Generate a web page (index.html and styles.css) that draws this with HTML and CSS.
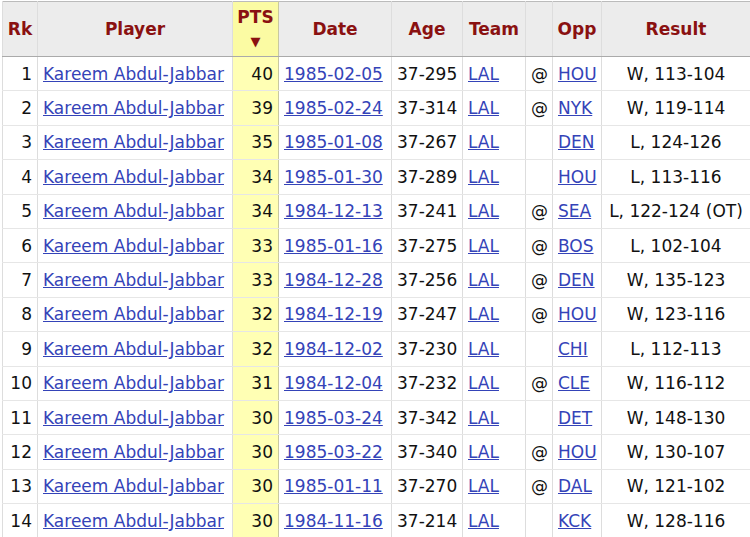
FILE: index.html
```html
<!DOCTYPE html>
<html>
<head>
<meta charset="utf-8">
<link rel="stylesheet" href="styles.css">
</head>
<body>
<table class="stats">
  <colgroup>
    <col class="c-rk"><col class="c-player"><col class="c-pts"><col class="c-date"><col class="c-age"><col class="c-team"><col class="c-loc"><col class="c-opp"><col class="c-res">
  </colgroup>
  <thead>
    <tr>
      <th>Rk</th><th>Player</th><th class="pts">PTS<br><span class="arrow">▼</span></th><th>Date</th><th>Age</th><th>Team</th><th></th><th>Opp</th><th>Result</th>
    </tr>
  </thead>
  <tbody>
    <tr><td class="r">1</td><td><a href="#">Kareem Abdul-Jabbar</a></td><td class="pts r">40</td><td><a href="#">1985-02-05</a></td><td>37-295</td><td><a href="#">LAL</a></td><td class="c">@</td><td><a href="#">HOU</a></td><td class="c">W, 113-104</td></tr>
    <tr><td class="r">2</td><td><a href="#">Kareem Abdul-Jabbar</a></td><td class="pts r">39</td><td><a href="#">1985-02-24</a></td><td>37-314</td><td><a href="#">LAL</a></td><td class="c">@</td><td><a href="#">NYK</a></td><td class="c">W, 119-114</td></tr>
    <tr><td class="r">3</td><td><a href="#">Kareem Abdul-Jabbar</a></td><td class="pts r">35</td><td><a href="#">1985-01-08</a></td><td>37-267</td><td><a href="#">LAL</a></td><td class="c"></td><td><a href="#">DEN</a></td><td class="c">L, 124-126</td></tr>
    <tr><td class="r">4</td><td><a href="#">Kareem Abdul-Jabbar</a></td><td class="pts r">34</td><td><a href="#">1985-01-30</a></td><td>37-289</td><td><a href="#">LAL</a></td><td class="c"></td><td><a href="#">HOU</a></td><td class="c">L, 113-116</td></tr>
    <tr><td class="r">5</td><td><a href="#">Kareem Abdul-Jabbar</a></td><td class="pts r">34</td><td><a href="#">1984-12-13</a></td><td>37-241</td><td><a href="#">LAL</a></td><td class="c">@</td><td><a href="#">SEA</a></td><td class="c">L, 122-124 (OT)</td></tr>
    <tr><td class="r">6</td><td><a href="#">Kareem Abdul-Jabbar</a></td><td class="pts r">33</td><td><a href="#">1985-01-16</a></td><td>37-275</td><td><a href="#">LAL</a></td><td class="c">@</td><td><a href="#">BOS</a></td><td class="c">L, 102-104</td></tr>
    <tr><td class="r">7</td><td><a href="#">Kareem Abdul-Jabbar</a></td><td class="pts r">33</td><td><a href="#">1984-12-28</a></td><td>37-256</td><td><a href="#">LAL</a></td><td class="c">@</td><td><a href="#">DEN</a></td><td class="c">W, 135-123</td></tr>
    <tr><td class="r">8</td><td><a href="#">Kareem Abdul-Jabbar</a></td><td class="pts r">32</td><td><a href="#">1984-12-19</a></td><td>37-247</td><td><a href="#">LAL</a></td><td class="c">@</td><td><a href="#">HOU</a></td><td class="c">W, 123-116</td></tr>
    <tr><td class="r">9</td><td><a href="#">Kareem Abdul-Jabbar</a></td><td class="pts r">32</td><td><a href="#">1984-12-02</a></td><td>37-230</td><td><a href="#">LAL</a></td><td class="c"></td><td><a href="#">CHI</a></td><td class="c">L, 112-113</td></tr>
    <tr><td class="r">10</td><td><a href="#">Kareem Abdul-Jabbar</a></td><td class="pts r">31</td><td><a href="#">1984-12-04</a></td><td>37-232</td><td><a href="#">LAL</a></td><td class="c">@</td><td><a href="#">CLE</a></td><td class="c">W, 116-112</td></tr>
    <tr><td class="r">11</td><td><a href="#">Kareem Abdul-Jabbar</a></td><td class="pts r">30</td><td><a href="#">1985-03-24</a></td><td>37-342</td><td><a href="#">LAL</a></td><td class="c"></td><td><a href="#">DET</a></td><td class="c">W, 148-130</td></tr>
    <tr><td class="r">12</td><td><a href="#">Kareem Abdul-Jabbar</a></td><td class="pts r">30</td><td><a href="#">1985-03-22</a></td><td>37-340</td><td><a href="#">LAL</a></td><td class="c">@</td><td><a href="#">HOU</a></td><td class="c">W, 130-107</td></tr>
    <tr><td class="r">13</td><td><a href="#">Kareem Abdul-Jabbar</a></td><td class="pts r">30</td><td><a href="#">1985-01-11</a></td><td>37-270</td><td><a href="#">LAL</a></td><td class="c">@</td><td><a href="#">DAL</a></td><td class="c">W, 121-102</td></tr>
    <tr><td class="r">14</td><td><a href="#">Kareem Abdul-Jabbar</a></td><td class="pts r">30</td><td><a href="#">1984-11-16</a></td><td>37-214</td><td><a href="#">LAL</a></td><td class="c"></td><td><a href="#">KCK</a></td><td class="c">W, 128-116</td></tr>
  </tbody>
</table>
</body>
</html>
```
FILE: styles.css
```css
html, body {
  margin: 0;
  padding: 0;
  background: #fff;
}
body {
  padding: 1px 0 0 2px;
  font-family: "DejaVu Sans", Verdana, sans-serif;
  font-size: 17px;
  color: #111;
}
.stats {
  border-collapse: collapse;
  table-layout: fixed;
  width: 748px;
  border-top: 1px solid #bbb;
  border-left: 1px solid #bbb;
}
.c-rk { width: 35px; }
.c-player { width: 195px; }
.c-pts { width: 46px; }
.c-date { width: 113px; }
.c-age { width: 71px; }
.c-team { width: 63px; }
.c-loc { width: 27px; }
.c-opp { width: 49px; }
.c-res { width: 149px; }
th {
  background: #ececec;
  color: #8a1111;
  font-weight: bold;
  height: 54px;
  padding: 0 3px;
  text-align: center;
  vertical-align: middle;
  border-left: 1px solid #ddd;
  border-right: 1px solid #ddd;
  border-bottom: 1px solid #aaa;
  line-height: 23px;
  white-space: nowrap;
}
th.pts {
  background: #fbfba3;
  border-left: 1px solid #c8c8a0;
  border-right: 1px solid #c8c8a0;
}
.arrow {
  font-size: 13px;
}
td {
  height: 33.4px;
  padding: 0 5px;
  border-left: 1px solid #ddd;
  border-right: 1px solid #ddd;
  border-bottom: 1px solid #e6e6e6;
  white-space: nowrap;
  vertical-align: middle;
}
td.pts {
  background: #ffffb4;
  border-left: 1px solid #c8c8a0;
  border-right: 1px solid #c8c8a0;
}
td.r { text-align: right; }
td.c { text-align: center; }
a {
  color: #3443b8;
  text-decoration: underline;
}
```
